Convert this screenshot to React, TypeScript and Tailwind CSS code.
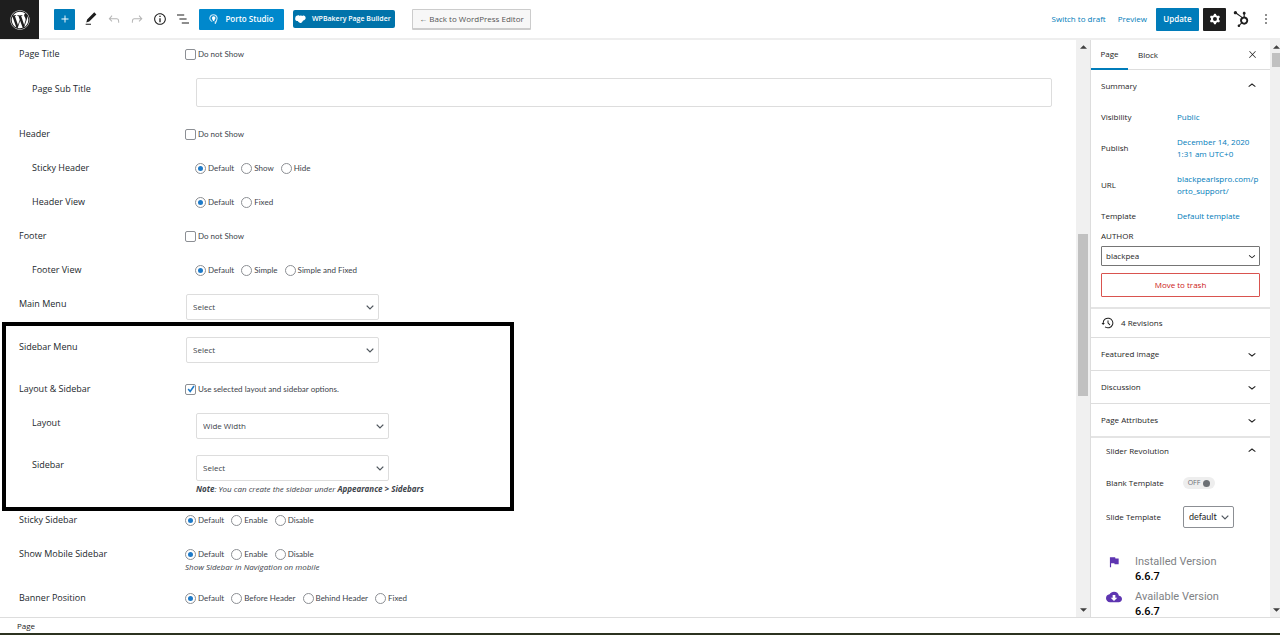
import { useState, type ReactNode } from 'react'
import { FaWordpress, FaHubspot } from 'react-icons/fa'
import { MdFlag, MdCloudDownload } from 'react-icons/md'

const icons = {
  plus: 'M18 11.2h-5.2V6h-1.6v5.2H6v1.6h5.2V18h1.6v-5.2H18z',
  pencil: 'M20.1 5.1L16.9 2 6.2 12.7l-1.3 4.4 4.5-1.3L20.1 5.1zM4 20.8h8v-1.5H4v1.5z',
  undo: 'M18.3 11.7c-.6-.6-1.4-.9-2.3-.9H6.7l2.9-3.3-1.1-1-4.5 5L8.5 16l1-1-2.7-2.7H16c.5 0 .9.2 1.3.5 1 1 1 3.4 1 4.5v.3h1.5v-.2c0-1.5 0-4.3-1.5-5.7z',
  redo: 'M15.6 6.5l-1.1 1 2.9 3.3H8c-.9 0-1.7.3-2.3.9-1.4 1.5-1.4 4.2-1.4 5.6v.2h1.5v-.3c0-1.1 0-3.5 1-4.5.3-.3.7-.5 1.3-.5h9.2L14.5 15l1.1 1.1 4.6-4.6-4.6-5z',
  info: 'M12 3.2c-4.8 0-8.8 3.9-8.8 8.8 0 4.8 3.9 8.8 8.8 8.8 4.8 0 8.8-3.9 8.8-8.8 0-4.8-4-8.8-8.8-8.8zm0 16c-4 0-7.2-3.3-7.2-7.2C4.8 8 8 4.8 12 4.8s7.2 3.3 7.2 7.2c0 4-3.2 7.2-7.2 7.2zM11 17h2v-6h-2v6zm0-8h2V7h-2v2z',
  list: 'M13.8 5.2H3v1.5h10.8V5.2zm-3.6 12v1.5H21v-1.5H10.2zm7.2-6H6.6v1.5h10.8v-1.5z',
  close: 'M13 11.8l6.1-6.3-1-1-6.1 6.2-6.1-6.2-1 1 6.1 6.3-6.5 6.7 1 1 6.5-6.6 6.5 6.6 1-1z',
  more: 'M13 19h-2v-2h2v2zm0-6h-2v-2h2v2zm0-6h-2V5h2v2z',
  cog: 'M10.289 4.836A1 1 0 0111.275 4h1.306a1 1 0 01.987.836l.244 1.466c.787.26 1.503.679 2.108 1.218l1.393-.522a1 1 0 011.216.437l.653 1.13a1 1 0 01-.23 1.273l-1.148.944a6.025 6.025 0 010 2.435l1.149.946a1 1 0 01.23 1.272l-.653 1.13a1 1 0 01-1.216.437l-1.394-.522c-.605.54-1.32.958-2.108 1.218l-.244 1.466a1 1 0 01-.987.836h-1.306a1 1 0 01-.986-.836l-.244-1.466a5.995 5.995 0 01-2.108-1.218l-1.394.522a1 1 0 01-1.217-.436l-.653-1.131a1 1 0 01.23-1.272l1.149-.946a6.026 6.026 0 010-2.435l-1.148-.944a1 1 0 01-.23-1.272l.653-1.131a1 1 0 011.217-.437l1.393.522a5.994 5.994 0 012.108-1.218l.244-1.466zM14.929 12a3 3 0 11-6 0 3 3 0 016 0z',
  backup: 'M5.5 12h1.75l-2.5 3-2.5-3H4a8 8 0 113.134 6.35l.907-1.194A6.5 6.5 0 105.5 12zm9.53 1.97l-2.28-2.28V8.5a.75.75 0 00-1.5 0V12a.747.747 0 00.218.529l1.282-.84-1.28.842 2.5 2.5a.75.75 0 101.06-1.061z',
  down: 'M17.5 11.6L12 16l-5.5-4.4.9-1.2L12 14l4.5-3.6 1 1.2z',
  up: 'M6.5 12.4L12 8l5.5 4.4-.9 1.2L12 10l-4.5 3.6-1-1.2z',
}

function Icon({ name, className }: { name: keyof typeof icons; className?: string }) {
  return (
    <svg viewBox="0 0 24 24" fill="currentColor" fillRule="evenodd" className={className ?? 'size-4'} aria-hidden="true">
      <path d={icons[name]} />
    </svg>
  )
}

function ToolButton({ name, label, faded }: { name: keyof typeof icons; label: string; faded?: boolean }) {
  return (
    <button type="button" aria-label={label} className={faded ? 'text-[#b5b5b5]' : 'text-[#1e1e1e]'}>
      <Icon name={name} />
    </button>
  )
}

const rowKinds = {
  text: { pad: 'py-[9px]', label: '', top: 'w-[185px]', nested: 'w-[195px]' },
  select: { pad: 'pt-[7px] pb-[9px]', label: 'pt-[2px]', top: 'w-[186px]', nested: 'w-[196px]' },
  input: { pad: 'pt-[7px] pb-[10px]', label: 'pt-[3px]', top: 'w-[186px]', nested: 'w-[196px]' },
}

function Row({ label, htmlFor, nested, kind = 'text', children }: {
  label: string
  htmlFor?: string
  nested?: boolean
  kind?: keyof typeof rowKinds
  children: ReactNode
}) {
  const LabelTag = htmlFor ? 'label' : 'span'
  const styles = rowKinds[kind]
  return (
    <div className={`flex items-start ${styles.pad}`}>
      <LabelTag
        htmlFor={htmlFor}
        className={`shrink-0 font-['Open_Sans','Noto_Sans',sans-serif] text-[9px] leading-4 text-[#23282d] ${nested ? 'pl-8' : 'pl-[19px]'} ${nested ? styles.nested : styles.top} ${styles.label}`}
      >
        {label}
      </LabelTag>
      <div className="min-w-0 flex-1">{children}</div>
    </div>
  )
}

function CheckField({ label, defaultChecked }: { label: string; defaultChecked?: boolean }) {
  return (
    <label className="flex h-4 items-center gap-[2px] text-[8px] text-[#3c434a]">
      <span className="grid place-items-center">
        <input
          type="checkbox"
          defaultChecked={defaultChecked}
          className="peer col-start-1 row-start-1 size-[11px] appearance-none rounded-[2px] border border-[#8c8f94] bg-white"
        />
        <svg viewBox="0 0 10 10" className="pointer-events-none invisible col-start-1 row-start-1 size-[10px] peer-checked:visible" aria-hidden="true">
          <path d="M2.2 5l2 2.4L8 2" fill="none" stroke="#1e7ac8" strokeWidth="1.6" />
        </svg>
      </span>
      {label}
    </label>
  )
}

function RadioGroup({ name, options }: { name: string; options: string[] }) {
  return (
    <div role="radiogroup" aria-label={name} className="flex h-4 items-center gap-[7px] text-[8px] text-[#3c434a]">
      {options.map((option, i) => (
        <label key={option} className="flex items-center gap-[2px]">
          <input
            type="radio"
            name={name}
            defaultChecked={i === 0}
            className="grid size-[11px] appearance-none place-items-center rounded-full border border-[#8c8f94] bg-white checked:before:size-[5px] checked:before:rounded-full checked:before:bg-[#1e7ac8] checked:before:content-['']"
          />
          {option}
        </label>
      ))}
    </div>
  )
}

function SelectField({ id, value }: { id: string; value: string }) {
  return (
    <div className="grid w-[193px] items-center">
      <select id={id} className="col-start-1 row-start-1 h-[26px] w-full appearance-none rounded-[2px] border border-[#ddd] bg-white px-[6px] font-['Open_Sans','Noto_Sans',sans-serif] text-[8px] text-[#3c434a]">
        <option>{value}</option>
      </select>
      <svg viewBox="0 0 8 5" className="pointer-events-none col-start-1 row-start-1 mr-[5px] h-[5px] w-2 justify-self-end" aria-hidden="true">
        <path d="M.7.6L4 3.9 7.3.6" fill="none" stroke="#50575e" strokeWidth="1.3" />
      </svg>
    </div>
  )
}

function Note({ children }: { children: ReactNode }) {
  return <p className="font-['Open_Sans','Noto_Sans',sans-serif] text-[8px] leading-[10px] text-[#3c434a] italic">{children}</p>
}

function SummaryRow({ label, children }: { label: string; children: ReactNode }) {
  return (
    <div className="flex items-center">
      <span className="w-[76px] shrink-0">{label}</span>
      <a href="#" className="flex-1 text-[#007cba]">{children}</a>
    </div>
  )
}

function PanelToggle({ title, open, className }: { title: string; open?: boolean; className?: string }) {
  return (
    <button type="button" aria-expanded={!!open} className={`flex w-full items-center justify-between pr-[10px] text-left font-medium ${className ?? 'h-8 pl-[10px]'}`}>
      {title}
      <Icon name={open ? 'up' : 'down'} />
    </button>
  )
}

function ScrollArrow({ up }: { up?: boolean }) {
  return (
    <svg viewBox="0 0 8 4" className="h-[4px] w-[7px] fill-[#404040]" aria-hidden="true">
      <path d={up ? 'M0 4L4 0l4 4z' : 'M0 0l4 4 4-4z'} />
    </svg>
  )
}

function Toolbar() {
  return (
    <header className="flex h-10 shrink-0 items-center border-b-2 border-[#eee] text-[8px]">
      <a href="#" aria-label="View Pages" className="grid h-[39px] w-[39px] shrink-0 place-items-center self-start bg-[#1e1e1e] text-white">
        <FaWordpress className="size-5" />
      </a>
      <button type="button" aria-label="Add block" className="ml-[15px] grid size-[21px] place-items-center rounded-[1px] bg-[#007cba] text-white">
        <Icon name="plus" className="size-[14px]" />
      </button>
      <div className="ml-2 flex items-center gap-[7px]">
        <ToolButton name="pencil" label="Tools" />
        <ToolButton name="undo" label="Undo" faded />
        <ToolButton name="redo" label="Redo" faded />
        <ToolButton name="info" label="Details" />
        <ToolButton name="list" label="List view" />
      </div>
      <button type="button" className="ml-2 flex h-[21px] w-[85px] items-center justify-center gap-[7px] rounded-[1px] bg-[#0088cc] font-semibold text-white">
        <svg viewBox="0 0 10 11" className="h-[10px] w-[9px]" aria-hidden="true">
          <path d="M3.600 8.200A4 3.800 0 1 1 8.600 6.200Q8.400 8 7 10.400V8" fill="none" stroke="#cfe8f6" strokeWidth="1.200" />
          <circle cx="5.200" cy="4.500" r="2" fill="#fff" />
          <path d="M3.600 5h2.600v2.200L4.600 8z" fill="#fff" />
        </svg>
        Porto Studio
      </button>
      <button type="button" className="ml-[9px] flex h-[18px] w-[102px] items-center gap-[6px] rounded-[2px] bg-[#0073aa] pl-[2px] text-[7px] font-semibold whitespace-nowrap text-white">
        <svg viewBox="0 0 11 9" className="h-[9px] w-[11px] shrink-0 fill-white" aria-hidden="true">
          <path d="M2.500.5C4 0 4.600 1 4.600 1S6-.3 7.400 1C9-.2 11 1.500 10.600 3.500 10.200 5.500 8 5 7.600 6.200 7 8 5 8.800 4 7.300 3 7 3 6 3 6 .5 6-.2 4.500.3 3 .3 1.500 1.200.8 2.500.5z" />
        </svg>
        WPBakery Page Builder
      </button>
      <button type="button" className="ml-[17px] h-[21px] w-[119px] rounded-[1px] border border-b-2 border-[#ccc] bg-[#f7f7f7] whitespace-nowrap text-[#555]">
        ← Back to WordPress Editor
      </button>

      <div className="ml-auto flex items-center pr-[6px]">
        <a href="#" className="text-[#007cba]">Switch to draft</a>
        <a href="#" className="ml-3 text-[#007cba]">Preview</a>
        <button type="button" className="ml-[9px] h-[23px] w-[43px] rounded-[1px] bg-[#007cba] font-semibold text-white">Update</button>
        <button type="button" aria-label="Settings" className="ml-1 grid size-[23px] place-items-center rounded-[1px] bg-[#1e1e1e] text-white">
          <Icon name="cog" />
        </button>
        <button type="button" aria-label="HubSpot" className="ml-[7px] text-[#1e1e1e]">
          <FaHubspot className="size-4" />
        </button>
        <button type="button" aria-label="Options" className="ml-[9px] text-[#1e1e1e]">
          <Icon name="more" />
        </button>
      </div>
    </header>
  )
}

function MetaOptions() {
  return (
    <main className="min-w-0 flex-1 overflow-hidden font-['Lato','Open_Sans',sans-serif]">
      {/* first row is cut by the toolbar */}
      <div className="-mt-[3px]">
        <Row label="Page Title"><CheckField label="Do not Show" /></Row>
        <Row label="Page Sub Title" htmlFor="page-sub-title" nested kind="input">
          <div className="pr-6">
            <input id="page-sub-title" type="text" className="block h-[29px] w-full rounded-[2px] border border-[#ddd] px-2 text-[8px]" />
          </div>
        </Row>
        <Row label="Header"><CheckField label="Do not Show" /></Row>
        <Row label="Sticky Header" nested><RadioGroup name="Sticky Header" options={['Default', 'Show', 'Hide']} /></Row>
        <Row label="Header View" nested><RadioGroup name="Header View" options={['Default', 'Fixed']} /></Row>
        <Row label="Footer"><CheckField label="Do not Show" /></Row>
        <Row label="Footer View" nested><RadioGroup name="Footer View" options={['Default', 'Simple', 'Simple and Fixed']} /></Row>
        <Row label="Main Menu" htmlFor="main-menu" kind="select"><SelectField id="main-menu" value="Select" /></Row>

        <div className="relative pt-px">
          <Row label="Sidebar Menu" htmlFor="sidebar-menu" kind="select"><SelectField id="sidebar-menu" value="Select" /></Row>
          <Row label="Layout & Sidebar"><CheckField label="Use selected layout and sidebar options." defaultChecked /></Row>
          <Row label="Layout" htmlFor="layout" nested kind="select"><SelectField id="layout" value="Wide Width" /></Row>
          <Row label="Sidebar" htmlFor="sidebar" nested kind="select">
            <SelectField id="sidebar" value="Select" />
            <div className="pt-[3px]">
              <Note><b>Note</b>: You can create the sidebar under <b>Appearance &gt; Sidebars</b></Note>
            </div>
          </Row>
          {/* highlight frame */}
          <div className="pointer-events-none absolute -top-[7px] -bottom-2 left-[2px] w-[512px] border-4 border-black" />
        </div>

        <Row label="Sticky Sidebar"><RadioGroup name="Sticky Sidebar" options={['Default', 'Enable', 'Disable']} /></Row>
        <Row label="Show Mobile Sidebar">
          <RadioGroup name="Show Mobile Sidebar" options={['Default', 'Enable', 'Disable']} />
          <Note>Show Sidebar in Navigation on mobile</Note>
        </Row>
        <Row label="Banner Position"><RadioGroup name="Banner Position" options={['Default', 'Before Header', 'Behind Header', 'Fixed']} /></Row>
      </div>
    </main>
  )
}

function Settings() {
  const [blank, setBlank] = useState(false)

  return (
    <aside className="w-[180px] shrink-0 overflow-hidden border-l border-[#ddd] text-[8px] text-[#1e1e1e]">
      <div className="flex h-[30px] items-stretch border-b border-[#ddd] font-medium">
        <button type="button" className="-mb-px w-[37px] border-b-2 border-[#007cba]">Page</button>
        <button type="button" className="w-10">Block</button>
        <button type="button" aria-label="Close settings" className="mr-3 ml-auto">
          <Icon name="close" className="size-[11px]" />
        </button>
      </div>

      <section className="border-b-2 border-[#e4e4e4] pb-[10px]">
        <PanelToggle title="Summary" open />
        <div className="flex flex-col gap-[13px] px-[10px] pt-[9px] leading-3">
          <SummaryRow label="Visibility">Public</SummaryRow>
          <SummaryRow label="Publish">December 14, 2020<br />1:31 am UTC+0</SummaryRow>
          <SummaryRow label="URL">blackpearlspro.com/p<br />orto_support/</SummaryRow>
          <SummaryRow label="Template">Default template</SummaryRow>
        </div>
        <div className="px-[10px] pt-2">
          <label htmlFor="author" className="block leading-3">AUTHOR</label>
          <div className="mt-1 grid items-center">
            <select id="author" className="col-start-1 row-start-1 h-5 w-full appearance-none rounded-[1px] border border-[#757575] bg-white px-1 text-[8px]">
              <option>blackpea</option>
            </select>
            <Icon name="down" className="pointer-events-none col-start-1 row-start-1 mr-px size-[14px] justify-self-end" />
          </div>
          <button type="button" className="mt-[7px] block h-6 w-full rounded-[1px] border border-[#d9534f] text-[#cc1818]">Move to trash</button>
        </div>
      </section>

      <button type="button" className="flex h-[29px] w-full items-center gap-[5px] border-b border-[#ddd] pl-[9px] font-medium">
        <Icon name="backup" />
        4 Revisions
      </button>
      <div className="border-b border-[#ddd]"><PanelToggle title="Featured image" /></div>
      <div className="border-b border-[#ddd]"><PanelToggle title="Discussion" /></div>
      <div className="border-b-2 border-[#e4e4e4]"><PanelToggle title="Page Attributes" /></div>

      <section>
        <PanelToggle title="Slider Revolution" open className="h-[26px] pl-[15px]" />
        <div className="flex h-[38px] items-center pl-[15px]">
          <span className="w-[77px]">Blank Template</span>
          <button
            type="button"
            role="switch"
            aria-checked={blank}
            aria-label="Blank Template"
            onClick={() => setBlank(!blank)}
            className="flex h-3 w-8 items-center justify-center gap-[3px] rounded-full bg-[#eee] text-[7px] text-[#6c7075]"
          >
            {blank ? 'ON' : 'OFF'}
            <span className="size-[7px] rounded-full bg-[#6c7075]" />
          </button>
        </div>
        <div className="flex h-[30px] items-center pl-[15px]">
          <label htmlFor="slide-template" className="w-[77px]">Slide Template</label>
          <div className="grid w-[51px] items-center">
            <select id="slide-template" className="col-start-1 row-start-1 h-[22px] w-full appearance-none rounded-[2px] border border-[#8c8f94] bg-white px-[5px] font-['Lato',sans-serif] text-[9px]">
              <option>default</option>
            </select>
            <svg viewBox="0 0 8 5" className="pointer-events-none col-start-1 row-start-1 mr-[5px] h-[5px] w-2 justify-self-end" aria-hidden="true">
              <path d="M.7.6L4 3.900 7.300.6" fill="none" stroke="#50575e" strokeWidth="1.200" />
            </svg>
          </div>
        </div>
        <dl className="grid grid-cols-[16px_1fr] gap-x-[13px] gap-y-[5px] pt-[22px] pl-[15px] font-['Roboto',sans-serif] text-[11px] leading-[15px]">
          <MdFlag className="size-4 p-px text-[#5e35b1]" />
          <div>
            <dt className="text-[#808285]">Installed Version</dt>
            <dd className="font-medium text-black">6.6.7</dd>
          </div>
          <MdCloudDownload className="size-4 text-[#5e35b1]" />
          <div>
            <dt className="text-[#808285]">Available Version</dt>
            <dd className="font-medium text-black">6.6.7</dd>
          </div>
        </dl>
      </section>
    </aside>
  )
}

export default function App() {
  return (
    <div className="flex h-screen flex-col overflow-hidden bg-white font-['Open_Sans','Noto_Sans',sans-serif]">
      <Toolbar />
      <div className="flex min-h-0 flex-1">
        <MetaOptions />
        <div className="flex w-[14px] shrink-0 flex-col items-center bg-[#f0f0f0] py-[5px]">
          <ScrollArrow up />
          <div className="grow-[184]" />
          <div className="w-[10px] grow-[162] bg-[#c1c1c1]" />
          <div className="grow-[211]" />
          <ScrollArrow />
        </div>
        <Settings />
        <div className="flex w-[10px] shrink-0 flex-col items-end bg-[#f0f0f0] py-[5px]">
          <ScrollArrow up />
          <div className="mt-1 h-[14px] w-2 bg-[#c1c1c1]" />
          <div className="flex-1" />
          <ScrollArrow />
        </div>
      </div>
      <footer className="flex h-[18px] shrink-0 items-center border-t border-b-2 border-t-[#ddd] border-b-[#2c3320] pl-[17px] text-[8px] text-[#1e1e1e]">
        Page
      </footer>
    </div>
  )
}
